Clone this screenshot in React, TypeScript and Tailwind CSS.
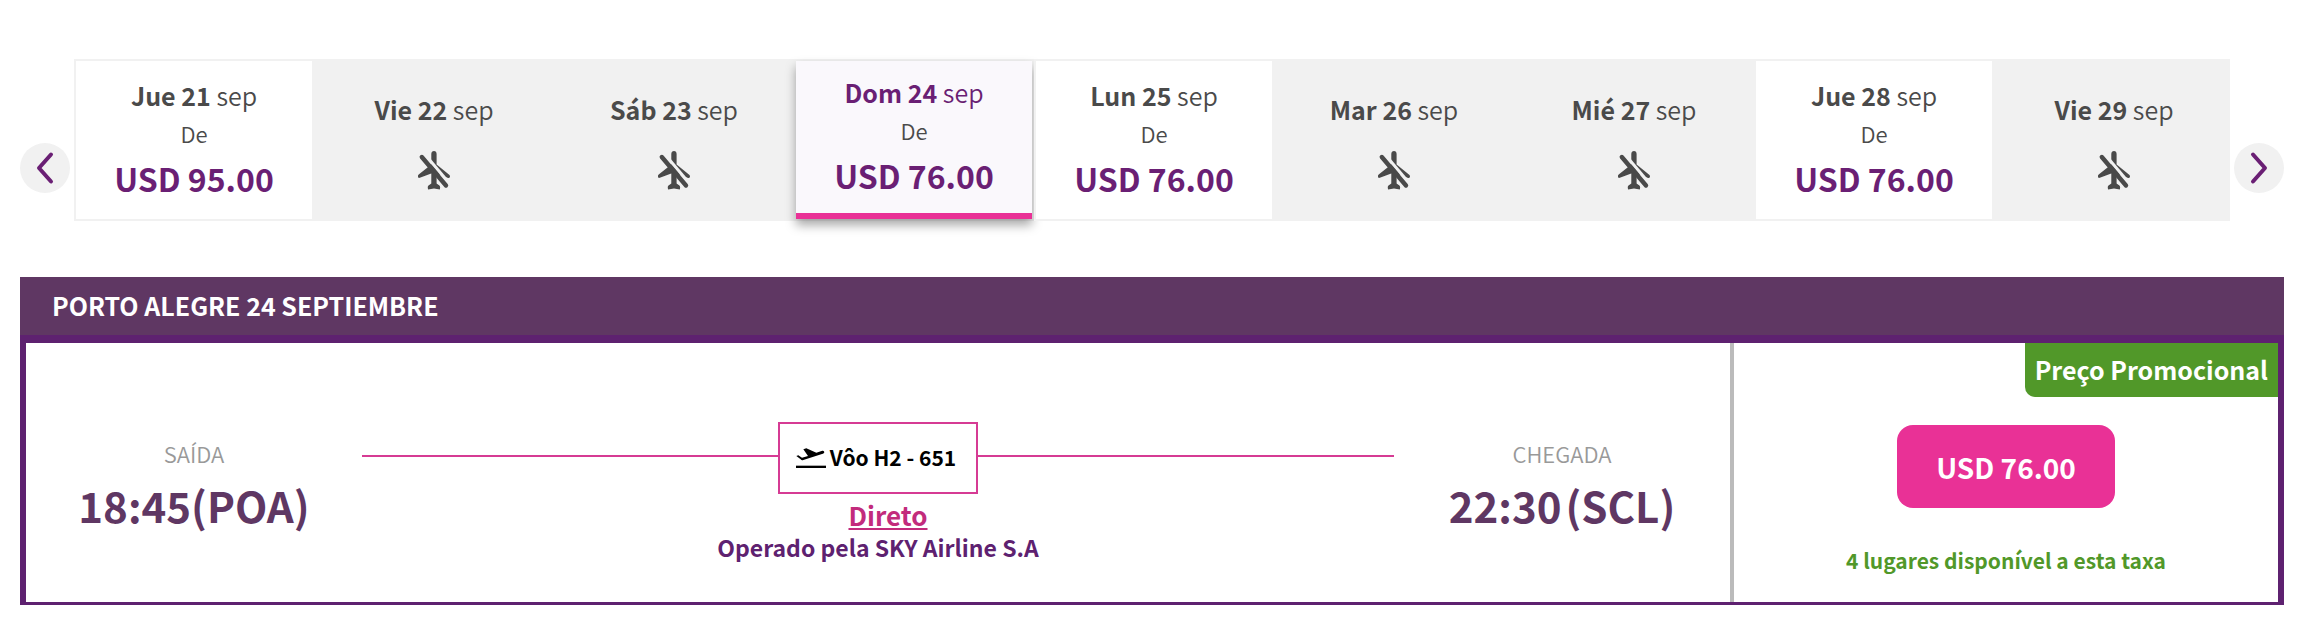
import { clsx } from "clsx";

type Day = {
  date: string;
  month: string;
  price?: string;
  selected?: boolean;
};

const days: Day[] = [
  { date: "Jue 21", month: "sep", price: "USD 95.00" },
  { date: "Vie 22", month: "sep" },
  { date: "Sáb 23", month: "sep" },
  { date: "Dom 24", month: "sep", price: "USD 76.00", selected: true },
  { date: "Lun 25", month: "sep", price: "USD 76.00" },
  { date: "Mar 26", month: "sep" },
  { date: "Mié 27", month: "sep" },
  { date: "Jue 28", month: "sep", price: "USD 76.00" },
  { date: "Vie 29", month: "sep" },
];

function NoFlightIcon() {
  return (
    <svg viewBox="0 0 32 39" className="mt-[25px] h-[39px] w-8" fill="none" aria-hidden="true">
      <path
        d="M16 0c1.600 0 2.600 1.200 2.600 3v10.500l12.600 10.200c.8.700 1 1.600.6 2.600-.3.700-1 .900-1.700.6l-11.500-4.400v10l2.800 2c.8.600 1 1.800.4 3.900L16 37.500l-5.900.9c-.6-2.100-.4-3.300.4-3.900l2.800-2v-10L1.800 26.800c-.7.300-1.400.1-1.700-.6-.4-1-.2-1.900.6-2.600l12.600-10V3c0-1.800 1.100-3 2.700-3z"
        fill="#4a4a4a"
      />
      <path d="M7 3.500 31 32" stroke="#f1f1f1" strokeWidth="3" />
      <path d="M3.800 6 28 34.500" stroke="#4a4a4a" strokeWidth="4.400" strokeLinecap="round" />
    </svg>
  );
}

function TakeoffIcon() {
  return (
    <svg viewBox="0 0 90 60" className="h-5 w-[30px]" fill="currentColor" aria-hidden="true">
      <path d="M0 53h90v7H0z" />
      <path d="M1 24l6-2 11 7 18-5L22 4l9-3 30 13 18-6c5-1 8 5 4 8-1 1-3 2-5 2L22 36c-3 1-6 1-8-2z" />
    </svg>
  );
}

function ArrowButton({ direction }: { direction: "prev" | "next" }) {
  return (
    <button
      type="button"
      aria-label={direction === "prev" ? "Anterior" : "Siguiente"}
      className="mb-7 flex size-[50px] shrink-0 items-center justify-center self-end rounded-full bg-[#f1f1f1]"
    >
      <svg viewBox="0 0 50 50" className="size-[50px]" fill="none" aria-hidden="true">
        <path
          d={direction === "prev" ? "M31 11.500 19 25l12 13.500" : "M19 11.500 31 25 19 38.500"}
          stroke="#6a1f74"
          strokeWidth="4"
          strokeLinecap="round"
          strokeLinejoin="round"
        />
      </svg>
    </button>
  );
}

function DayCard({ day }: { day: Day }) {
  return (
    <li
      className={clsx(
        "h-[162px] border-2 border-[#f1f1f1] last:mr-1 last:border-r-0 last:pl-0.5",
        !day.price && "bg-[#f1f1f1]"
      )}
    >
      <button
        type="button"
        disabled={!day.price}
        className={clsx(
          "flex size-full flex-col items-center justify-center",
          !day.price && "pt-0.5",
          day.price && !day.selected && "bg-white",
          day.selected && "border-b-[6px] border-[#e93196] bg-[#faf8fc] shadow-[0_6px_10px_rgba(0,0,0,0.35)]"
        )}
      >
        <span className={clsx("text-[25px] leading-[34px]", day.selected ? "text-[#6a1f74]" : "text-[#4a4a4a]")}>
          <strong className="font-bold">{day.date}</strong> <span className="font-[350]">{day.month}</span>
        </span>
        {day.price ? (
          <>
            <span className="text-[22px] leading-[42px] font-[350] text-[#4a4a4a]">De</span>
            <span className="text-[32px] leading-[48px] font-bold text-[#6a1f74]">{day.price}</span>
          </>
        ) : (
          <NoFlightIcon />
        )}
      </button>
    </li>
  );
}

function Endpoint({ label, time, airport, spaced }: { label: string; time: string; airport: string; spaced?: boolean }) {
  return (
    <div className="flex w-[336px] shrink-0 flex-col items-center pt-[93px]">
      <span className="text-[22px] leading-[34px] font-[350] text-[#999999]">{label}</span>
      <span className={clsx("flex text-[42px] leading-[70px] font-bold text-[#5f3763]", spaced && "gap-1")}>
        <span>{time}</span>
        <span>({airport})</span>
      </span>
    </div>
  );
}

export default function App() {
  return (
    <main className="min-h-screen bg-white px-5 pt-[59px] font-['Noto_Sans_CJK_SC',sans-serif]">
      <nav className="mr-1 flex gap-1" aria-label="Fechas">
        <ArrowButton direction="prev" />
        <ul className="-mr-1 grid flex-1 grid-cols-9">
          {days.map((day) => (
            <DayCard key={day.date} day={day} />
          ))}
        </ul>
        <ArrowButton direction="next" />
      </nav>

      <section className="mt-14 mr-1">
        <h2 className="bg-[#5f3763] px-8 pb-0.5 text-[25px] leading-[56px] font-bold text-white">
          PORTO ALEGRE 24 SEPTIEMBRE
        </h2>
        <div className="flex h-[270px] border-x-[6px] border-t-8 border-b-[3px] border-[#5e2170]">
          <Endpoint label="SAÍDA" time="18:45" airport="POA" />

          <div className="flex flex-1 flex-col items-center pt-[79px]">
            <div className="flex w-full items-center">
              <span className="mb-1 h-0.5 flex-1 bg-[#d63b94]" />
              <div className="flex h-[72px] w-[200px] items-center justify-center gap-1 border-2 border-[#d63b94] pr-1 text-black">
                <TakeoffIcon />
                <span className="pb-0.5 text-[21px] leading-8 font-bold">Vôo H2 - 651</span>
              </div>
              <span className="mb-1 h-0.5 flex-1 bg-[#d63b94]" />
            </div>
            <a href="#direto" className="ml-5 text-[26px] leading-[42px] font-bold text-[#c22b7c] underline">
              Direto
            </a>
            <span className="text-[23px] leading-[22px] font-bold text-[#5e2170]">Operado pela SKY Airline S.A</span>
          </div>

          <Endpoint label="CHEGADA" time="22:30" airport="SCL" spaced />

          <div className="flex w-[548px] shrink-0 flex-col items-center border-l-4 border-[#bbbbbb]">
            <span className="self-end rounded-bl-[10px] bg-[#519829] px-[10px] pb-0.5 text-[25px] leading-[52px] font-bold text-white">
              Preço Promocional
            </span>
            <button
              type="button"
              className="mt-7 h-[83px] w-[218px] rounded-2xl bg-[#e93196] text-[28px] font-bold text-white"
            >
              USD 76.00
            </button>
            <span className="mt-9 text-[21px] leading-8 font-bold text-[#519829]">4 lugares disponível a esta taxa</span>
          </div>
        </div>
      </section>
    </main>
  );
}
